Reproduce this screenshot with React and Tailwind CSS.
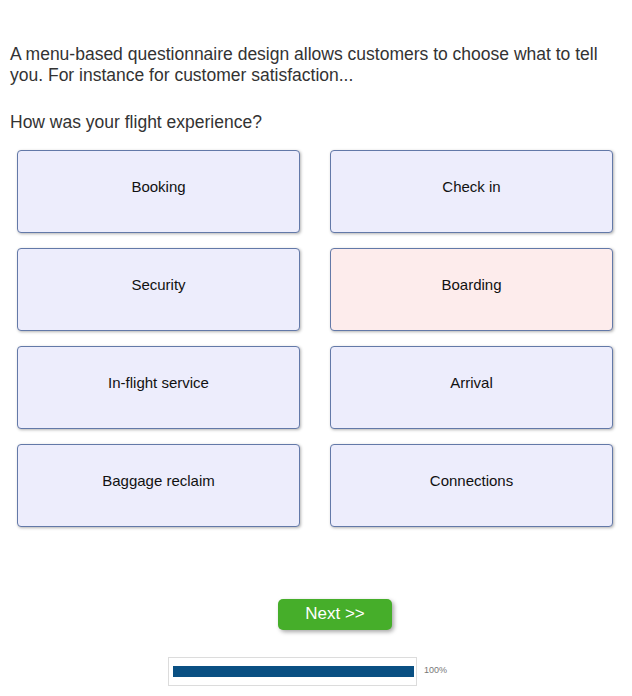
const options = [
  { label: "Booking" },
  { label: "Check in" },
  { label: "Security" },
  { label: "Boarding", selected: true },
  { label: "In-flight service" },
  { label: "Arrival" },
  { label: "Baggage reclaim" },
  { label: "Connections" },
]

function OptionCard({ label, selected }) {
  return (
    <button
      className={`h-[83px] w-full flex items-center justify-center pb-[8px] rounded-[4px] border border-[#6379a8] shadow-[1px_1px_3px_rgba(0,0,0,0.3)] text-[15px] text-[#111] ${selected ? "bg-[#fdecec]" : "bg-[#ededfc]"}`}
    >
      {label}
    </button>
  )
}

export default function App() {
  return (
    <div className="w-[632px] h-[696px] bg-white font-['Liberation_Sans',Arial,sans-serif] text-[#333] overflow-hidden">
      <div className="pt-[44px] pl-[10px] pr-[20px]">
        <p className="text-[17.5px] leading-[21px]">
          A menu-based questionnaire design allows customers to choose what to tell you. For instance for customer satisfaction...
        </p>
        <p className="mt-[26px] text-[17.5px] leading-[21px]">How was your flight experience?</p>
      </div>

      <div className="mt-[17px] ml-[17px] mr-[19px] grid grid-cols-2 gap-x-[30px] gap-y-[15px]">
        {options.map(o => (
          <OptionCard key={o.label} label={o.label} selected={o.selected} />
        ))}
      </div>

      <div className="mt-[72px] pl-[278px]">
        <button className="w-[114px] h-[31px] rounded-[5px] bg-[#46ae2a] text-white text-[17px] shadow-[2px_2px_4px_rgba(0,0,0,0.35)] flex items-center justify-center pb-[2px]">
          Next &gt;&gt;
        </button>
      </div>

      <div className="mt-[27px] pl-[168px] flex items-center">
        <div className="w-[249px] h-[29px] border border-[#dcdcdc] pl-[4px] pr-[2px] flex items-center">
          <div className="h-[11px] w-full bg-[#0a5083]" />
        </div>
        <span className="ml-[7px] text-[9px] text-[#777] -mt-[2px]">100%</span>
      </div>
    </div>
  )
}
